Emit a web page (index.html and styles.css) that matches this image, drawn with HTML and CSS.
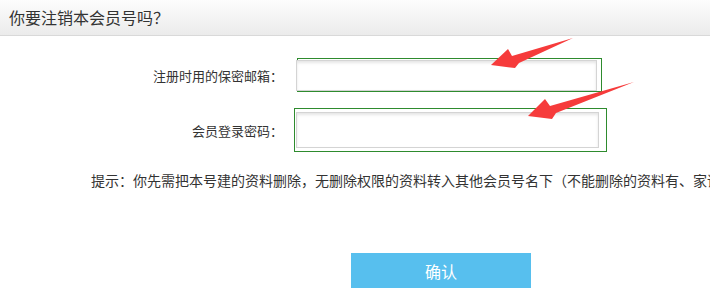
FILE: index.html
```html
<!DOCTYPE html>
<html lang="zh-CN">
<head>
    <meta charset="UTF-8">
    <title>注销会员号</title>
    <link rel="stylesheet" href="styles.css">
</head>
<body>
    <div class="head">你要注销本会员号吗？</div>
    <div class="form">
        <div class="row">
            <label class="lbl">注册时用的保密邮箱：</label>
            <div class="field field1"><input class="ipt" type="text"></div>
        </div>
        <div class="row row2">
            <label class="lbl">会员登录密码：</label>
            <div class="field field2"><input class="ipt" type="password"></div>
        </div>
        <p class="tip">提示：你先需把本号建的资料删除，无删除权限的资料转入其他会员号名下（不能删除的资料有、家谱</p>
        <button class="ok">确认</button>
    </div>
    <!-- 标注箭头 -->
    <svg class="arrows" width="710" height="298" viewBox="0 0 710 298">
        <polygon fill="#f63b3b" points="491,65 508,49 512,56 573,38 519,63 515,68"/>
        <polygon fill="#f63b3b" points="528,116 545,99 550,106 634,82 556,113 552,119"/>
    </svg>
</body>
</html>
```

FILE: styles.css
```css
*{
    margin: 0;
    padding: 0;
    box-sizing: border-box;
}
body{
    width: 710px;
    height: 298px;
    overflow: hidden;
    background: #fff;
    font-family: "Noto Sans CJK SC", "Liberation Sans", sans-serif;
    color: #333;
    position: relative;
}
.head{
    height: 36px;
    line-height: 34px;
    padding-left: 9px;
    font-size: 16px;
    background: linear-gradient(#fdfdfd, #ebebeb);
    border-bottom: 1px solid #d9d9d9;
}
.form{
    padding-top: 22px;
}
.row{
    display: flex;
    align-items: center;
    height: 34px;
}
.row2{
    margin-top: 16px;
    height: 44px;
}
.lbl{
    width: 283px;
    text-align: right;
    font-size: 13px;
}
.field{
    border: 1px solid #2e8b2e;
}
.field1{
    margin-left: 14px;
    width: 305px;
    height: 34px;
    padding-top: 1px;
}
.field2{
    margin-left: 11px;
    width: 313px;
    height: 44px;
    padding: 3px 0 0 1px;
}
.ipt{
    display: block;
    border: 1px solid #d4d4d4;
    box-shadow: inset 0 2px 3px #e6e6e6;
    outline: none;
    background: #fff;
}
.field1 .ipt{
    width: 301px;
    height: 31px;
    margin-left: -2px;
}
.field2 .ipt{
    width: 303px;
    height: 36px;
}
.tip{
    margin-top: 18px;
    padding-left: 91px;
    font-size: 14px;
    line-height: 20px;
    white-space: nowrap;
    overflow: hidden;
}
.ok{
    display: block;
    margin: 63px 0 0 351px;
    width: 180px;
    height: 35px;
    border: none;
    background: #57bfee;
    color: #fff;
    font-family: inherit;
    font-size: 16px;
}
.arrows{
    position: absolute;
    left: 0;
    top: 0;
    pointer-events: none;
}
```
